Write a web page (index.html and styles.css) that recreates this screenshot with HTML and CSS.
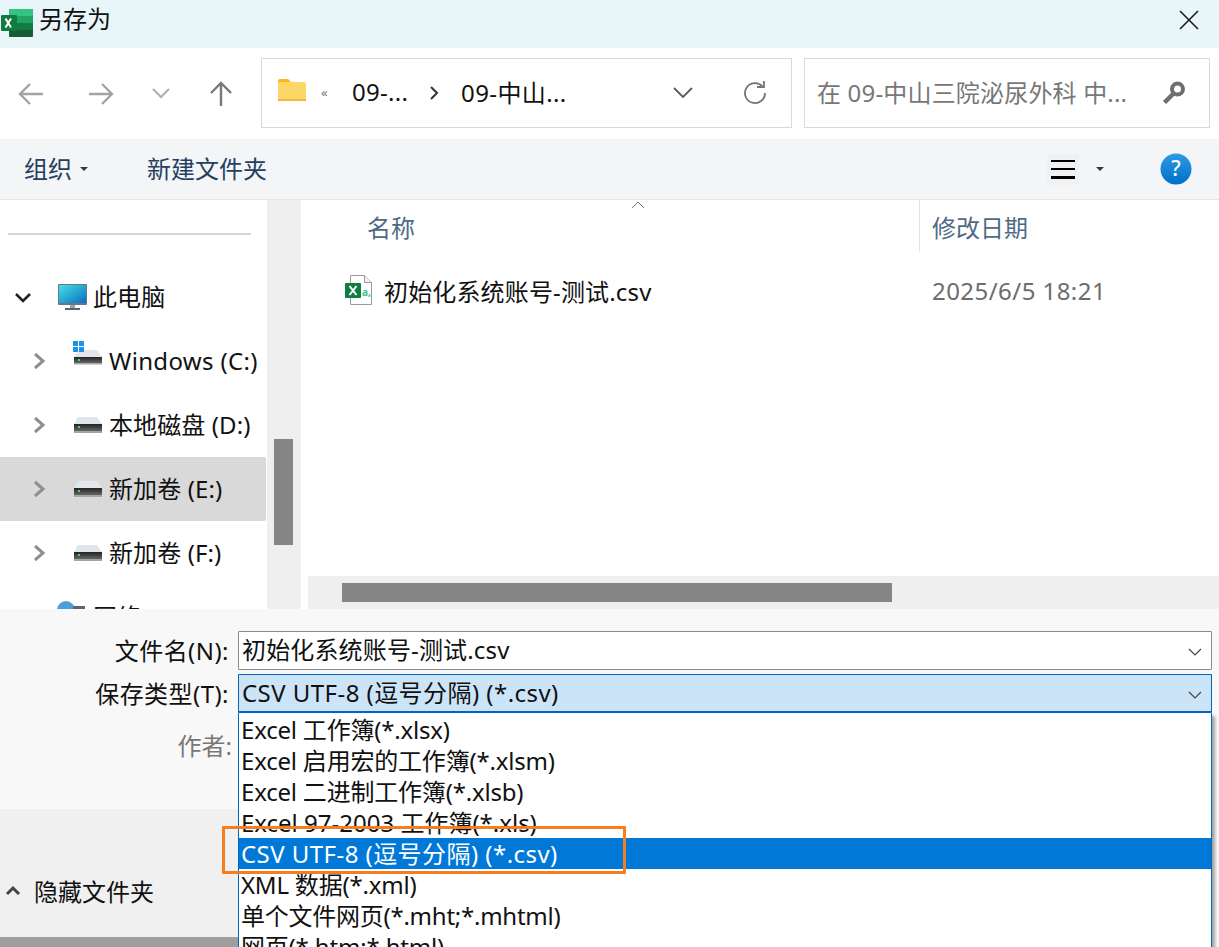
FILE: index.html
```html
<!DOCTYPE html>
<html lang="zh-CN">
<head>
<meta charset="utf-8">
<title>另存为</title>
<link rel="stylesheet" href="styles.css">
</head>
<body>
<div class="dialog">
  <header class="titlebar">
    <svg class="app-icon" width="33" height="33" viewBox="0 0 33 33"><rect x="9" y="5" width="24" height="28" rx="1" fill="#185c37"/><rect x="9" y="5" width="24" height="7" rx="1" fill="#33c481"/><rect x="21" y="12" width="12" height="7" fill="#21a366"/><rect x="9" y="12" width="12" height="7" fill="#21a366"/><rect x="9" y="19" width="12" height="7" fill="#107c41"/><rect x="21" y="19" width="12" height="7" fill="#107c41"/><rect x="1" y="11" width="16" height="16" rx="1" fill="#107c41"/><path d="M5.500 14.500l5.500 9M11 14.500l-5.500 9" stroke="#fff" stroke-width="2" fill="none"/></svg>
    <span class="title">另存为</span>
    <svg class="close" width="20" height="20" viewBox="0 0 20 20"><path d="M1 1l18 18M19 1L1 19" stroke="#1a1a1a" stroke-width="1.6" fill="none"/></svg>
  </header>

  <div class="navbar">
    <svg class="nav nav-back" width="26" height="24" viewBox="0 0 26 24"><path d="M25 12H2M12 2L2 12l10 10" stroke="#a3a3a3" stroke-width="2.400" fill="none"/></svg>
    <svg class="nav nav-forward" width="26" height="24" viewBox="0 0 26 24"><path d="M1 12h23M14 2l10 10-10 10" stroke="#a3a3a3" stroke-width="2.400" fill="none"/></svg>
    <svg class="nav nav-down" width="18" height="11" viewBox="0 0 18 11"><path d="M1 1l8 8 8-8" stroke="#b0b0b0" stroke-width="2.200" fill="none"/></svg>
    <svg class="nav nav-up" width="24" height="26" viewBox="0 0 24 26"><path d="M12 25V2M2 12L12 2l10 10" stroke="#787878" stroke-width="2.400" fill="none"/></svg>
    <div class="addr">
      <svg class="folder" width="28" height="22" viewBox="0 0 28 22"><path d="M0 2q0-2 2-2h7q2 0 3 2l1 1H0z" fill="#f8b91c"/><path d="M0 3h26q2 0 2 2v15q0 2-2 2H2q-2 0-2-2z" fill="#fcd666"/><rect y="20" width="28" height="2" fill="#eeb93a"/></svg>
      <span class="crumb-more">«</span>
      <span class="crumb crumb-a">09-...</span>
      <svg class="crumb-sep" width="10" height="14" viewBox="0 0 10 14"><path d="M2 1l6 6-6 6" stroke="#333" stroke-width="2" fill="none"/></svg>
      <span class="crumb crumb-b">09-中山...</span>
      <svg class="addr-drop" width="20" height="12" viewBox="0 0 20 12"><path d="M1 1l9 9 9-9" stroke="#5a5a5a" stroke-width="1.800" fill="none"/></svg>
      <svg class="refresh" width="24" height="24" viewBox="0 0 24 24"><path d="M19.500 5.500A10 10 0 1 0 22 12" stroke="#757575" stroke-width="1.800" fill="none"/><path d="M14 6h7V0" stroke="#757575" stroke-width="1.800" fill="none"/></svg>
    </div>
    <div class="search">
      <span class="search-text">在 09-中山三院泌尿外科 中...</span>
      <svg class="search-icon" width="24" height="24" viewBox="0 0 24 24"><circle cx="15.500" cy="8" r="5.500" stroke="#6e6e6e" stroke-width="4" fill="none"/><path d="M11 13l-8.500 8.500" stroke="#6e6e6e" stroke-width="4.400" fill="none"/></svg>
    </div>
  </div>

  <div class="cmdbar">
    <span class="cmd">组织</span><span class="caret caret-org"></span>
    <span class="cmd cmd-new">新建文件夹</span>
    <span class="view-btn"><i></i><i></i><i></i></span><span class="caret caret-view"></span>
    <svg class="help" width="32" height="32" viewBox="0 0 32 32"><defs><linearGradient id="hg" x1="0" y1="0" x2="0" y2="1"><stop offset="0" stop-color="#2a9be8"/><stop offset="1" stop-color="#0070c8"/></linearGradient></defs><circle cx="16" cy="16" r="15.500" fill="url(#hg)"/><text x="16" y="23" text-anchor="middle" class="help-q">?</text></svg>
  </div>

  <main class="browser">
    <nav class="tree">
      <div class="tree-rule"></div>
      <div class="tree-row">
        <svg class="tw open" width="18" height="11" viewBox="0 0 18 11"><path d="M2 2l7 7 7-7" stroke="#222" stroke-width="2.600" fill="none"/></svg>
        <svg class="pc" width="29" height="26" viewBox="0 0 29 26"><defs><linearGradient id="sc" x1="0" y1="0" x2="1" y2="1"><stop offset="0" stop-color="#42e0e8"/><stop offset="1" stop-color="#0a6fc0"/></linearGradient></defs><rect width="29" height="21" rx="1" fill="#6d7680"/><rect x="1" y="1" width="27" height="18" fill="url(#sc)"/><rect x="12" y="21" width="5" height="3" fill="#9aa3ab"/><rect x="7" y="24" width="15" height="2" fill="#5c636a"/></svg>
        <span class="tree-label label-pc">此电脑</span>
      </div>
      <div class="tree-row">
        <svg class="tw" width="14" height="18" viewBox="0 0 14 18"><path d="M2 2l8 7-8 7" stroke="#8f8f8f" stroke-width="3" fill="none"/></svg>
        <svg class="drive drive-c" width="29" height="24" viewBox="0 0 29 24"><defs><linearGradient id="dk" x1="0" y1="0" x2="0" y2="1"><stop offset="0" stop-color="#222"/><stop offset="1" stop-color="#666"/></linearGradient></defs><path d="M1 16L6 9h18l5 7z" fill="#e2e5ea"/><rect x="0" y="0" width="5" height="5" fill="#1b93e8"/><rect x="6" y="0" width="5" height="5" fill="#1b93e8"/><rect x="0" y="6" width="5" height="5" fill="#1b93e8"/><rect x="6" y="6" width="5" height="5" fill="#1b93e8"/><rect x="1" y="16" width="28" height="6" fill="url(#dk)"/><rect x="1" y="22" width="28" height="1.500" fill="#a5a5a5"/><rect x="5" y="18" width="2" height="2" fill="#3fdc3f"/></svg>
        <span class="tree-label label-win">Windows (C:)</span>
      </div>
      <div class="tree-row">
        <svg class="tw" width="14" height="18" viewBox="0 0 14 18"><path d="M2 2l8 7-8 7" stroke="#8f8f8f" stroke-width="3" fill="none"/></svg>
        <svg class="drive" width="29" height="16" viewBox="0 0 29 16"><path d="M1 7L5 0h19l5 7z" fill="#e2e5ea"/><rect x="1" y="7" width="28" height="7" fill="url(#dk)"/><rect x="1" y="14" width="28" height="2" fill="#a5a5a5"/><rect x="5" y="9" width="2" height="2" fill="#3fdc3f"/></svg>
        <span class="tree-label">本地磁盘 (D:)</span>
      </div>
      <div class="tree-row selected">
        <svg class="tw" width="14" height="18" viewBox="0 0 14 18"><path d="M2 2l8 7-8 7" stroke="#8f8f8f" stroke-width="3" fill="none"/></svg>
        <svg class="drive" width="29" height="16" viewBox="0 0 29 16"><path d="M1 7L5 0h19l5 7z" fill="#e4e6ec"/><rect x="1" y="7" width="28" height="7" fill="url(#dk)"/><rect x="1" y="14" width="28" height="2" fill="#a5a5a5"/><rect x="5" y="9" width="2" height="2" fill="#3fdc3f"/></svg>
        <span class="tree-label">新加卷 (E:)</span>
      </div>
      <div class="tree-row">
        <svg class="tw" width="14" height="18" viewBox="0 0 14 18"><path d="M2 2l8 7-8 7" stroke="#8f8f8f" stroke-width="3" fill="none"/></svg>
        <svg class="drive" width="29" height="16" viewBox="0 0 29 16"><path d="M1 7L5 0h19l5 7z" fill="#e2e5ea"/><rect x="1" y="7" width="28" height="7" fill="url(#dk)"/><rect x="1" y="14" width="28" height="2" fill="#a5a5a5"/><rect x="5" y="9" width="2" height="2" fill="#3fdc3f"/></svg>
        <span class="tree-label">新加卷 (F:)</span>
      </div>
      <div class="tree-row">
        <svg class="globe" width="30" height="28" viewBox="0 0 30 28"><circle cx="11" cy="11" r="9" fill="#4a9fd8"/><rect x="18" y="7" width="12" height="20" fill="#5c6670"/></svg>
        <span class="tree-label label-net">网络</span>
      </div>
    </nav>
    <div class="tree-scroll"><div class="tree-thumb"></div></div>
    <div class="pane-gap"></div>
    <section class="files">
      <div class="col-head">
        <span class="col col-name">名称</span>
        <svg class="sort" width="14" height="8" viewBox="0 0 14 8"><path d="M1 7l6-6 6 6" stroke="#7a7a7a" stroke-width="1" fill="none"/></svg>
        <span class="col col-date">修改日期</span>
      </div>
      <div class="file-row">
        <svg class="file-icon" width="28" height="30" viewBox="0 0 28 30"><path d="M5.500.5h14l7 7v22h-21z" fill="#fff" stroke="#9a9a9a"/><path d="M19.500.5v7h7" fill="#f0f0f0" stroke="#9a9a9a"/><rect y="8" width="16" height="15" rx="1" fill="#107c41"/><path d="M4.500 11l7 9M11.500 11l-7 9" stroke="#fff" stroke-width="2" fill="none"/><text x="17" y="21" class="file-a">a,</text></svg>
        <span class="file-name">初始化系统账号-测试.csv</span>
        <span class="file-date">2025/6/5 18:21</span>
      </div>
      <div class="h-scroll"><div class="h-thumb"></div></div>
    </section>
  </main>

  <footer class="savepanel">
    <div class="field-row row-name">
      <label class="field-label">文件名(N):</label>
      <div class="combo combo-name">初始化系统账号-测试.csv
        <svg class="combo-arrow" width="14" height="8" viewBox="0 0 14 8"><path d="M1 1l6 6 6-6" stroke="#444" stroke-width="1.200" fill="none"/></svg>
      </div>
    </div>
    <div class="field-row row-type">
      <label class="field-label">保存类型(T):</label>
      <div class="combo combo-active">CSV UTF-8 (逗号分隔) (*.csv)
        <svg class="combo-arrow" width="14" height="8" viewBox="0 0 14 8"><path d="M1 1l6 6 6-6" stroke="#444" stroke-width="1.200" fill="none"/></svg>
      </div>
    </div>
    <div class="author">作者:</div>
    <div class="lower">
      <svg class="hide-chevron" width="16" height="11" viewBox="0 0 16 11"><path d="M2 9l6-6 6 6" stroke="#444" stroke-width="3" fill="none"/></svg>
      <span class="hide-label">隐藏文件夹</span>
    </div>
    <div class="bottom-strip"></div>
  </footer>

  <ul class="dropdown">
    <li>Excel 工作簿(*.xlsx)</li>
    <li>Excel 启用宏的工作簿(*.xlsm)</li>
    <li>Excel 二进制工作簿(*.xlsb)</li>
    <li class="plain">Excel 97-2003 工作簿(*.xls)</li>
    <li class="current">CSV UTF-8 (逗号分隔) (*.csv)</li>
    <li>XML 数据(*.xml)</li>
    <li class="tight">单个文件网页(*.mht;*.mhtml)</li>
    <li>网页(*.htm;*.html)</li>
  </ul>
  <div class="highlight"></div>
</div>
</body>
</html>
```
FILE: styles.css
```css
* { box-sizing: border-box; }
html, body { margin: 0; padding: 0; height: 100%; overflow: hidden; }
body { background: #fff; }
.dialog {
  position: relative;
  width: 1219px;
  height: 947px;
  overflow: hidden;
  display: flex;
  flex-direction: column;
  font-family: "Noto Sans", "Noto Sans CJK SC", sans-serif;
  font-size: 24px;
  color: #111;
}

.titlebar {
  height: 48px;
  flex: none;
  display: flex;
  align-items: center;
  background: #e8f5f9;
}
.app-icon { flex: none; margin-top: -8px; }
.title { margin-left: 6px; font-size: 24px; line-height: 30px; margin-top: -10px; }
.close { margin-left: auto; margin-right: 20px; margin-top: -8px; }

.navbar {
  height: 91px;
  flex: none;
  display: flex;
  align-items: center;
  background: #fff;
  padding-bottom: 2px;
}
.nav { flex: none; margin-top: 2px; }
.nav-back { margin-left: 18px; }
.nav-forward { margin-left: 44px; }
.nav-down { margin-left: 38px; }
.nav-up { margin-left: 39px; }
.addr {
  margin-left: 28px;
  width: 531px;
  height: 70px;
  border: 1px solid #d9d9d9;
  display: flex;
  align-items: center;
  flex: none;
}
.folder { margin-left: 16px; flex: none; margin-top: -6px; }
.crumb-more { margin-left: 15px; width: 10px; font-size: 13px; color: #777; line-height: 1; }
.crumb { color: #111; white-space: nowrap; font-size: 24px; margin-bottom: 2px; }
.crumb-a { margin-left: 21px; width: 75px; letter-spacing: .3px; }
.crumb-sep { margin-left: 2px; flex: none; }
.crumb-b { margin-left: 22px; width: 110px; letter-spacing: .4px; }
.addr-drop { margin-left: 102px; flex: none; }
.refresh { margin-left: 50px; flex: none; }
.search {
  margin-left: 12px;
  width: 406px;
  height: 70px;
  border: 1px solid #d9d9d9;
  display: flex;
  align-items: center;
  flex: none;
}
.search-text { margin-left: 12px; margin-bottom: 2px; color: #777; white-space: nowrap; font-size: 24px; letter-spacing: .18px; }
.search-icon { margin-left: auto; margin-right: 23px; flex: none; }

.cmdbar {
  height: 61px;
  flex: none;
  display: flex;
  align-items: center;
  background: #f3f5f7;
  border-bottom: 1px solid #e6e6e6;
}
.cmd { color: #24405f; font-size: 24px; margin-left: 24px; margin-bottom: 4px; white-space: nowrap; }
.cmd-new { margin-left: 59px; }
.caret { width: 0; height: 0; border-left: 4px solid transparent; border-right: 4px solid transparent; border-top: 4px solid #2a3a55; flex: none; }
.caret-org { margin-left: 8px; }
.view-btn {
  margin-left: auto;
  width: 32px;
  height: 31px;
  padding: 6px 4px;
  background: #f0f1f2;
  display: flex;
  flex-direction: column;
  justify-content: space-between;
  flex: none;
}
.view-btn i { display: block; height: 2.5px; background: #000; }
.caret-view { margin-left: 17px; }
.help { margin-left: 56px; margin-right: 27px; flex: none; }
.help-q { font-family: "Noto Sans", sans-serif; font-size: 21px; font-weight: 500; fill: #fff; }

.browser {
  height: 409px;
  flex: none;
  display: flex;
  overflow: hidden;
  background: #fff;
}
.tree { width: 267px; flex: none; padding-top: 33px; }
.tree-rule { height: 2px; margin: 0 16px 0 8px; background: #d4d4d4; }
.tree-row {
  height: 64px;
  display: flex;
  align-items: center;
  position: relative;
  border-radius: 0 2px 2px 0;
}
.tree-rule + .tree-row { margin-top: 30px; }
.tree-row.selected { background: #d9d9d9; margin-right: 1px; }
.tw { margin-left: 33px; flex: none; }
.tw.open { margin-left: 14px; }
.pc { margin-left: 26px; flex: none; }
.drive { margin-left: 26px; flex: none; }
.drive-c { margin-top: -16px; }
.globe { margin-left: 55px; margin-bottom: 8px; flex: none; }
.tree-label { margin-left: 7px; margin-bottom: 4px; white-space: nowrap; font-size: 24px; color: #111; letter-spacing: .1px; }
.label-pc { margin-left: 6px; }
.label-win { letter-spacing: .33px; margin-bottom: 2px; }
.label-net { margin-left: 8px; }
.tree-scroll { width: 33px; flex: none; background: #efefef; padding: 239px 7px 0; }
.tree-thumb { height: 106px; background: #858585; }
.pane-gap { width: 4px; flex: none; background: #fff; border-left: 1px solid #f5f5f5; }
.files { flex: 1; display: flex; flex-direction: column; min-width: 0; }
.col-head { height: 52px; flex: none; position: relative; display: flex; align-items: center; }
.col { color: #4f6a85; font-size: 24px; }
.col-name { margin-left: 63px; }
.sort { position: absolute; left: 327px; top: 1px; }
.col-date {
  position: absolute;
  left: 615px;
  top: 0;
  height: 52px;
  padding-left: 12px;
  border-left: 1px solid #e2e2e2;
  display: flex;
  align-items: center;
}
.file-row { height: 62px; flex: none; display: flex; align-items: center; margin-top: 7px; }
.file-icon { margin-left: 41px; flex: none; }
.file-a { font-family: "Noto Sans", sans-serif; font-size: 10px; fill: #33c481; font-weight: 700; }
.file-name { margin-left: 11px; width: 548px; white-space: nowrap; font-size: 24px; letter-spacing: .15px; }
.file-date { color: #6d6d6d; white-space: nowrap; font-size: 24px; letter-spacing: .45px; }
.h-scroll { margin-top: auto; margin-left: 4px; height: 33px; flex: none; background: #efefef; padding: 7px 0 0 34px; }
.h-thumb { width: 550px; height: 19px; background: #858585; }

.savepanel {
  flex: 1;
  min-height: 0;
  display: flex;
  flex-direction: column;
  background: #f8f8f8;
  position: relative;
  padding-top: 22px;
}
.field-row { height: 39px; flex: none; display: flex; }
.row-type { margin-top: 4px; }
.field-label { width: 238px; padding-right: 9px; text-align: right; line-height: 39px; color: #111; font-size: 24px; white-space: nowrap; flex: none; letter-spacing: .45px; }
.combo {
  width: 974px;
  height: 39px;
  flex: none;
  position: relative;
  border: 1px solid #8a8a8a;
  background: #fff;
  border-radius: 1px;
  padding-left: 3px;
  line-height: 36px;
  white-space: nowrap;
}
.combo-name { letter-spacing: .15px; }
.combo-active { background: #cce4f7; border: 1px solid #0067c0; border-bottom-width: 2px; letter-spacing: .45px; }
.combo-arrow { position: absolute; right: 9px; top: 16px; }
.author { margin-top: 13px; height: 40px; width: 232px; text-align: right; color: #777; line-height: 40px; flex: none; }
.lower {
  height: 128px;
  margin-top: 43px;
  width: 238px;
  flex: none;
  background: #f0f0f0;
  display: flex;
  align-items: center;
  padding-top: 34px;
}
.hide-chevron { margin-left: 5px; flex: none; }
.hide-label { margin-left: 13px; white-space: nowrap; }
.bottom-strip { flex: 1; width: 238px; background: #9e9e9e; }

.dropdown {
  position: absolute;
  left: 238px;
  top: 713px;
  width: 974px;
  height: 234px;
  margin: 0;
  padding: 1px 0 0;
  list-style: none;
  background: #fff;
  border: 1px solid #0067c0;
  border-width: 0 1px 0 1px;
  box-shadow: 3px 3px 3px rgba(0,0,0,.35);
  overflow: hidden;
}
.dropdown li { height: 31px; line-height: 31px; padding-left: 2px; white-space: nowrap; color: #111; font-size: 24px; letter-spacing: -.2px; }
.dropdown li.plain { letter-spacing: 0; }
.dropdown li.tight { letter-spacing: -.25px; }
.dropdown li.current { background: #0078d7; color: #fff; padding-left: 2px; letter-spacing: .45px; }
.highlight {
  position: absolute;
  left: 222px;
  top: 826px;
  width: 404px;
  height: 48px;
  border: 3px solid #f57e20;
  border-radius: 1px;
}
```
